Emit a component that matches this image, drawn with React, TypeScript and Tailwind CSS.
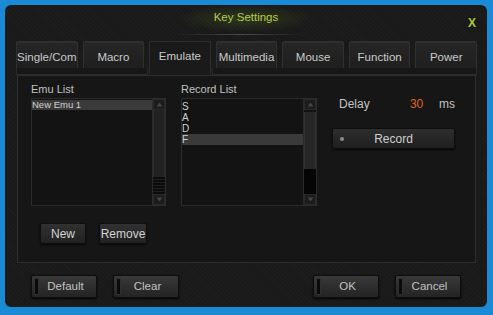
import React from "react";

const tabs = ["Single/Com", "Macro", "Emulate", "Multimedia", "Mouse", "Function", "Power"];

const Arrow = ({ up }: { up?: boolean }) => (
  <div className="flex h-[11px] items-center justify-center border border-[#2a2a2a] bg-[#1c1c1c]">
    <svg width="7" height="5" viewBox="0 0 7 5">
      <path d={up ? "M0.5 4.5 L3.5 0.5 L6.5 4.5 Z" : "M0.5 0.5 L3.5 4.5 L6.5 0.5 Z"} fill="#444" />
    </svg>
  </div>
);

const DarkButton = ({ label }: { label: string }) => (
  <button className="flex h-[23px] w-[66px] items-center rounded-[2px] border border-[#0d0d0d] bg-gradient-to-b from-[#393939] to-[#242424] pl-[2px] pr-[4px] text-[11.5px] text-[#c2c2c2] shadow-[0_1px_2px_rgba(0,0,0,0.9)]">
    <span className="h-[17px] w-[5px] rounded-[1px] border border-[#303030] bg-[#0a0a0a]" />
    <span className="flex-1 text-center">{label}</span>
  </button>
);

const SmallButton = ({ label, w }: { label: string; w: string }) => (
  <button
    className={`flex h-[21px] ${w} items-center justify-center rounded-[2px] border border-[#0e0e0e] bg-gradient-to-b from-[#313131] to-[#212121] text-[12px] text-[#d2d2d2] shadow-[0_1px_2px_rgba(0,0,0,0.8)]`}
  >
    {label}
  </button>
);

export default function App() {
  return (
    <div className="h-[315px] w-[493px] bg-[#1a8ad4] pb-[8px] pl-[5px] pr-[6px] pt-[5px] font-['Liberation_Sans',Arial,sans-serif]">
      <div className="flex h-full flex-col rounded-[6px] bg-[#1b1b1b] bg-[repeating-linear-gradient(45deg,#1d1d1d_0px,#1d1d1d_1px,#191919_1px,#191919_3px)]">
        {/* title */}
        <div className="relative flex h-[30px] items-center justify-center bg-[radial-gradient(ellipse_70px_14px_at_50%_45%,rgba(120,160,40,0.22),transparent)]">
          <span className="pb-[6px] pt-[2px] text-[11.5px] text-[#b3cd4a]">Key Settings</span>
          <span className="absolute right-[11px] top-[9px] text-[12px] font-bold text-[#a9c93c]">X</span>
          <div className="absolute bottom-0 left-[170px] h-px w-[130px] bg-gradient-to-r from-transparent via-[#4a4a4a] to-transparent" />
        </div>

        {/* tabs */}
        <div className="ml-[11px] mt-[6px] w-[461px]">
          <div className="grid h-[27px] grid-cols-7 gap-[5px]">
            {tabs.map((t) => (
              <div
                key={t}
                className={`flex justify-center rounded-[2px] border text-[11.5px] text-[#cacaca] ${
                  t === "Emulate"
                    ? "h-[34px] items-start border-[#2e2e2e] border-b-0 bg-[#1a1a1a] pt-[6px]"
                    : "items-center border-[#303030] bg-gradient-to-b from-[#262626] to-[#1d1d1d] shadow-[inset_0_1px_0_#2e2e2e]"
                }`}
              >
                {t}
              </div>
            ))}
          </div>
          <div className="flex h-[7px]">
            <div className="w-[132px] border-x border-b border-[#2a2a2a] bg-[#171717]" />
            <div className="w-[64px]" />
            <div className="flex-1 border-x border-b border-[#2a2a2a] bg-[#171717]" />
          </div>
        </div>

        {/* panel */}
        <div className="ml-[12px] flex h-[188px] w-[459px] gap-[15px] border border-[#2e2e2e] bg-[#161616] pl-[13px] pt-[7px]">
          {/* emu list */}
          <div className="flex w-[135px] flex-col">
            <div className="mb-[2px] h-[13px] text-[11px] leading-[13px] text-[#c0c0c0]">Emu List</div>
            <div className="flex h-[108px] border border-[#2c2c2c] bg-[#131313]">
              <div className="flex-1 pt-[1px]">
                <div className="h-[10px] bg-[#3a3a3a] text-[9.5px] leading-[10px] text-[#d0d0d0]">New Emu 1</div>
              </div>
              <div className="flex w-[13px] flex-col border-l border-[#2a2a2a]">
                <Arrow up />
                <div className="flex-1 border-x border-[#2e2e2e] bg-[#222]" />
                <div className="h-[17px] bg-[repeating-linear-gradient(180deg,#0c0c0c_0px,#0c0c0c_2px,#1f1f1f_2px,#1f1f1f_3px)]" />
                <Arrow />
              </div>
            </div>
            <div className="ml-[9px] mt-[17px] flex gap-[13px]">
              <SmallButton label="New" w="w-[46px]" />
              <SmallButton label="Remove" w="w-[48px]" />
            </div>
          </div>

          {/* record list */}
          <div className="flex w-[136px] flex-col">
            <div className="mb-[2px] h-[13px] text-[11px] leading-[13px] text-[#c0c0c0]">Record List</div>
            <div className="flex h-[108px] border border-[#2c2c2c] bg-[#131313]">
              <div className="flex-1 pt-[2px] text-[10px] leading-[11px] text-[#d0d0d0]">
                <div className="h-[11px]">S</div>
                <div className="h-[11px]">A</div>
                <div className="h-[11px]">D</div>
                <div className="h-[11px] bg-[#3a3a3a]">F</div>
              </div>
              <div className="flex w-[13px] flex-col border-l border-[#2a2a2a]">
                <div className="h-[13px]">
                  <Arrow up />
                </div>
                <div className="h-[57px] border-x border-[#333] bg-[#272727]" />
                <div className="flex-1 bg-[#050505]" />
                <Arrow />
              </div>
            </div>
          </div>

          {/* delay / record */}
          <div className="flex w-[123px] flex-col pt-[14px]">
            <div className="flex h-[14px] items-center text-[12px] text-[#c4c4c4]">
              <span className="ml-[7px] w-[73px]">Delay</span>
              <span className="w-[30px] text-[#e0632c]">30</span>
              <span>ms</span>
            </div>
            <button className="mt-[17px] flex h-[21px] items-center rounded-[2px] border border-[#0e0e0e] bg-gradient-to-b from-[#2e2e2e] to-[#1f1f1f] text-[12px] text-[#d0d0d0] shadow-[0_1px_2px_rgba(0,0,0,0.8)]">
              <span className="ml-[7px] h-[4px] w-[4px] rounded-full bg-[#8a8a8a]" />
              <span className="flex-1 pr-[11px] text-center">Record</span>
            </button>
          </div>
        </div>

        {/* bottom buttons */}
        <div className="mt-[12px] flex justify-between px-[26px]">
          <div className="flex gap-[16px]">
            <DarkButton label="Default" />
            <DarkButton label="Clear" />
          </div>
          <div className="flex gap-[16px]">
            <DarkButton label="OK" />
            <DarkButton label="Cancel" />
          </div>
        </div>
      </div>
    </div>
  );
}
